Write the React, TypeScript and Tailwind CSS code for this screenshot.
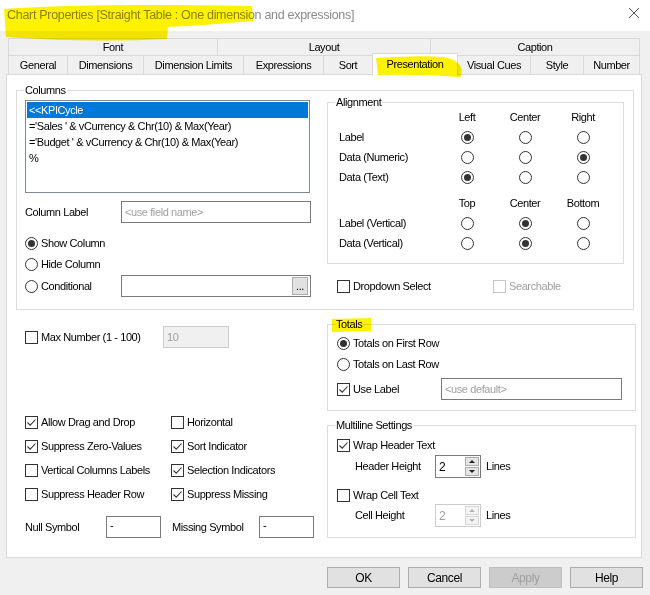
import React from 'react';

const tabsTop = [
  { label: 'Font', w: 'w-[210px]' },
  { label: 'Layout', w: 'w-[214px]' },
  { label: 'Caption', w: 'w-[210px]' },
];

const tabsBottom = [
  { label: 'General', w: 'w-[60px]' },
  { label: 'Dimensions', w: 'w-[77px]' },
  { label: 'Dimension Limits', w: 'w-[101px]' },
  { label: 'Expressions', w: 'w-[81px]' },
  { label: 'Sort', w: 'w-[50px]' },
  { label: 'Presentation', w: 'w-[86px]', active: true },
  { label: 'Visual Cues', w: 'w-[74px]' },
  { label: 'Style', w: 'w-[54px]' },
  { label: 'Number', w: 'w-[57px]' },
];

const columns = [
  '<<KPICycle',
  "='Sales ' & vCurrency & Chr(10) & Max(Year)",
  "='Budget ' & vCurrency & Chr(10) & Max(Year)",
  '%',
];

function Radio({ on }: { on?: boolean }) {
  return (
    <span className="flex h-[13px] w-[13px] shrink-0 items-center justify-center rounded-full border border-[#333333] bg-white">
      {on && <span className="h-[7px] w-[7px] rounded-full bg-[#333333]" />}
    </span>
  );
}

function Check({ on, dim }: { on?: boolean; dim?: boolean }) {
  return (
    <span
      className={`flex h-[13px] w-[13px] shrink-0 items-center justify-center border bg-white ${
        dim ? 'border-[#c4c4c4]' : 'border-[#333333]'
      }`}
    >
      {on && (
        <svg width="11" height="11" viewBox="0 0 11 11">
          <path d="M1.5 5.5 L4.2 8.2 L9.5 2.5" fill="none" stroke="#333333" strokeWidth="1.1" />
        </svg>
      )}
    </span>
  );
}

function Opt({ kind, on, dim, label }: { kind: 'radio' | 'check'; on?: boolean; dim?: boolean; label: string }) {
  return (
    <div className="flex items-center gap-[3px]">
      {kind === 'radio' ? <Radio on={on} /> : <Check on={on} dim={dim} />}
      <span className={dim ? 'text-[#a0a0a0]' : ''}>{label}</span>
    </div>
  );
}

function Group({ label, className, children }: { label: string; className: string; children?: React.ReactNode }) {
  return (
    <div className={`relative border border-[#dcdcdc] ${className}`}>
      <span className="absolute left-[7px] top-[-8px] bg-white px-[1px] leading-[14px]">{label}</span>
      {children}
    </div>
  );
}

function Spin({ dim }: { dim?: boolean }) {
  const arrow = dim ? '#b5b5b5' : '#222222';
  return (
    <div className={`flex h-[23px] w-[46px] border bg-white ${dim ? 'border-[#cccccc]' : 'border-[#7a7a7a]'}`}>
      <span className={`flex-1 pl-[3px] pt-[2px] text-[12px] ${dim ? 'text-[#a0a0a0]' : ''}`}>2</span>
      <div className="flex w-[16px] flex-col gap-px p-px">
        {['M1 5 L4 2 L7 5 Z', 'M1 2 L4 5 L7 2 Z'].map((d) => (
          <span
            key={d}
            className={`flex flex-1 items-center justify-center border ${
              dim ? 'border-[#d6d6d6] bg-[#f4f4f4]' : 'border-[#adadad] bg-[#e5e5e5]'
            }`}
          >
            <svg width="8" height="7" viewBox="0 0 8 7">
              <path d={d} fill={arrow} />
            </svg>
          </span>
        ))}
      </div>
    </div>
  );
}

function Btn({ label, dim }: { label: string; dim?: boolean }) {
  return (
    <div
      className={`flex h-[21px] w-[73px] items-center justify-center border text-[12px] ${
        dim ? 'border-[#bfbfbf] bg-[#cccccc] text-[#a0a0a0]' : 'border-[#adadad] bg-[#e1e1e1]'
      }`}
    >
      {label}
    </div>
  );
}

export default function App() {
  const alignRows: { label: string; on: number }[] = [
    { label: 'Label', on: 0 },
    { label: 'Data (Numeric)', on: 2 },
    { label: 'Data (Text)', on: 0 },
  ];
  const vertRows: { label: string; on: number }[] = [
    { label: 'Label (Vertical)', on: 1 },
    { label: 'Data (Vertical)', on: 1 },
  ];

  return (
    <div className="relative h-[595px] w-[650px] overflow-hidden bg-[#f0f0f0] font-['Liberation_Sans',Arial,sans-serif] text-[11px] tracking-[-0.4px] text-black">
      {/* title bar */}
      <div className="flex h-[31px] items-start justify-between bg-white pl-[7px] pr-[10px] pt-[6px]">
        <span className="text-[12.5px] tracking-[-0.3px] text-[#8a8a8a]">
          Chart Properties [Straight Table : One dimension and expressions]
        </span>
        <svg width="12" height="12" viewBox="0 0 12 12" className="mt-[1px]">
          <path d="M1 1 L11 11 M11 1 L1 11" stroke="#555555" strokeWidth="1" />
        </svg>
      </div>

      {/* tabs */}
      <div className="ml-[8px] mt-[7px] flex h-[18px]">
        {tabsTop.map((t, i) => (
          <div
            key={t.label}
            className={`flex items-center justify-center border border-[#d9d9d9] ${t.w} ${i ? '-ml-px' : ''}`}
          >
            {t.label}
          </div>
        ))}
      </div>
      <div className="-mt-px ml-[8px] flex h-[20px] items-end">
        {tabsBottom.map((t, i) =>
          t.active ? (
            <div
              key={t.label}
              className={`relative z-10 -mb-px -ml-px flex h-[23px] items-center justify-center border border-b-0 border-[#d9d9d9] bg-white pb-[2px] ${t.w}`}
            >
              {t.label}
            </div>
          ) : (
            <div
              key={t.label}
              className={`flex h-[20px] items-center justify-center border border-[#d9d9d9] ${t.w} ${i ? '-ml-px' : ''}`}
            >
              {t.label}
            </div>
          )
        )}
      </div>

      {/* panel */}
      <div className="-mt-px ml-[6px] h-[484px] w-[636px] border border-[#d9d9d9] bg-white">
        <Group label="Columns" className="ml-[9px] mt-[15px] flex h-[220px] w-[618px]">
          <div className="w-[310px] pl-[8px] pt-[9px]">
            <div className="h-[93px] w-[285px] border border-[#828790] px-px pt-px">
              {columns.map((c, i) => (
                <div
                  key={c}
                  className={`h-[16px] pl-[2px] leading-[16px] ${i === 0 ? 'bg-[#0078d7] text-white' : ''}`}
                >
                  {c}
                </div>
              ))}
            </div>
            <div className="mt-[8px] flex h-[22px] items-center">
              <span className="w-[96px]">Column Label</span>
              <div className="flex h-[22px] w-[190px] items-center border border-[#7a7a7a] pl-[3px] text-[#a0a0a0]">
                &lt;use field name&gt;
              </div>
            </div>
            <div className="mt-[10px]">
              <div className="flex h-[21px] items-center">
                <Opt kind="radio" on label="Show Column" />
              </div>
              <div className="flex h-[21px] items-center">
                <Opt kind="radio" label="Hide Column" />
              </div>
              <div className="flex h-[22px] items-center">
                <div className="w-[96px]">
                  <Opt kind="radio" label="Conditional" />
                </div>
                <div className="flex h-[22px] w-[190px] items-center justify-end border border-[#7a7a7a] pr-[2px]">
                  <span className="flex h-[18px] w-[16px] items-end justify-center border border-[#adadad] bg-[#e1e1e1] pb-[2px] leading-none">
                    ...
                  </span>
                </div>
              </div>
            </div>
          </div>

          <div className="pt-[11px]">
            <Group label="Alignment" className="h-[162px] w-[297px] pl-[11px] pt-[4px]">
              <div className="grid grid-cols-[99px_58px_58px_58px] grid-rows-[20px_20px_20px_20px]">
                <span />
                {['Left', 'Center', 'Right'].map((h) => (
                  <span key={h} className="flex items-center justify-center">
                    {h}
                  </span>
                ))}
                {alignRows.map((r) => (
                  <React.Fragment key={r.label}>
                    <span className="flex items-center">{r.label}</span>
                    {[0, 1, 2].map((c) => (
                      <span key={c} className="flex items-center justify-center">
                        <Radio on={r.on === c} />
                      </span>
                    ))}
                  </React.Fragment>
                ))}
              </div>
              <div className="mt-[6px] grid grid-cols-[99px_58px_58px_58px] grid-rows-[20px_20px_20px]">
                <span />
                {['Top', 'Center', 'Bottom'].map((h) => (
                  <span key={h} className="flex items-center justify-center">
                    {h}
                  </span>
                ))}
                {vertRows.map((r) => (
                  <React.Fragment key={r.label}>
                    <span className="flex items-center">{r.label}</span>
                    {[0, 1, 2].map((c) => (
                      <span key={c} className="flex items-center justify-center">
                        <Radio on={r.on === c} />
                      </span>
                    ))}
                  </React.Fragment>
                ))}
              </div>
            </Group>
            <div className="mt-[12px] flex h-[20px] items-center pl-[10px]">
              <div className="w-[156px]">
                <Opt kind="check" label="Dropdown Select" />
              </div>
              <Opt kind="check" dim label="Searchable" />
            </div>
          </div>
        </Group>

        <div className="flex">
          {/* left lower */}
          <div className="w-[320px] pl-[18px]">
            <div className="mt-[16px] flex h-[22px] items-center">
              <div className="w-[138px]">
                <Opt kind="check" label="Max Number (1 - 100)" />
              </div>
              <div className="h-[22px] w-[66px] border border-[#cccccc] bg-[#f0f0f0] pl-[3px] pt-[2px] text-[#a0a0a0]">
                10
              </div>
            </div>
            <div className="mt-[62px] grid grid-cols-[146px_1fr] grid-rows-[24px_24px_24px_24px]">
              <div className="flex items-center"><Opt kind="check" on label="Allow Drag and Drop" /></div>
              <div className="flex items-center"><Opt kind="check" label="Horizontal" /></div>
              <div className="flex items-center"><Opt kind="check" on label="Suppress Zero-Values" /></div>
              <div className="flex items-center"><Opt kind="check" on label="Sort Indicator" /></div>
              <div className="flex items-center"><Opt kind="check" label="Vertical Columns Labels" /></div>
              <div className="flex items-center"><Opt kind="check" on label="Selection Indicators" /></div>
              <div className="flex items-center"><Opt kind="check" label="Suppress Header Row" /></div>
              <div className="flex items-center"><Opt kind="check" on label="Suppress Missing" /></div>
            </div>
            <div className="mt-[10px] flex h-[22px] items-center">
              <span className="w-[81px]">Null Symbol</span>
              <div className="h-[22px] w-[55px] border border-[#7a7a7a] pl-[3px]">-</div>
              <span className="ml-[11px] w-[87px]">Missing Symbol</span>
              <div className="h-[22px] w-[55px] border border-[#7a7a7a] pl-[3px]">-</div>
            </div>
          </div>

          {/* right lower */}
          <div>
            <Group label="Totals" className="mt-[14px] h-[87px] w-[309px] pl-[9px] pt-[8px]">
              <div className="flex h-[21px] items-center">
                <Opt kind="radio" on label="Totals on First Row" />
              </div>
              <div className="flex h-[21px] items-center">
                <Opt kind="radio" label="Totals on Last Row" />
              </div>
              <div className="mt-[3px] flex h-[22px] items-center">
                <div className="w-[104px]">
                  <Opt kind="check" on label="Use Label" />
                </div>
                <div className="flex h-[22px] w-[181px] items-center border border-[#7a7a7a] pl-[3px] text-[#a0a0a0]">
                  &lt;use default&gt;
                </div>
              </div>
            </Group>
            <Group label="Multiline Settings" className="mt-[14px] h-[113px] w-[309px] pl-[9px] pt-[10px]">
              <div className="flex h-[19px] items-center">
                <Opt kind="check" on label="Wrap Header Text" />
              </div>
              <div className="flex h-[23px] items-center pl-[18px]">
                <span className="w-[80px]">Header Height</span>
                <Spin />
                <span className="ml-[5px]">Lines</span>
              </div>
              <div className="mt-[7px] flex h-[20px] items-center">
                <Opt kind="check" label="Wrap Cell Text" />
              </div>
              <div className="-mt-px flex h-[23px] items-center pl-[18px]">
                <span className="w-[80px]">Cell Height</span>
                <Spin dim />
                <span className="ml-[5px]">Lines</span>
              </div>
            </Group>
          </div>
        </div>
      </div>

      {/* buttons */}
      <div className="ml-[327px] mt-[9px] flex gap-[8px]">
        <Btn label="OK" />
        <Btn label="Cancel" />
        <Btn label="Apply" dim />
        <Btn label="Help" />
      </div>

      {/* highlighter marks */}
      <svg
        className="pointer-events-none absolute left-0 top-0 z-20 mix-blend-multiply"
        width="650"
        height="595"
        viewBox="0 0 650 595"
      >
        <path
          d="M4 9 Q90 3 252 6 L253 21 Q210 25 168 27 L167 39 Q90 43 6 37 Z"
          fill="#fff200"
        />
        <path d="M376 58 Q420 55 442 57 Q459 59 462 70 L461 77 Q420 74 378 75 Z" fill="#fff200" />
        <path d="M332 319 L371 318 L371 331 L332 332 Z" fill="#fff200" />
      </svg>
    </div>
  );
}
